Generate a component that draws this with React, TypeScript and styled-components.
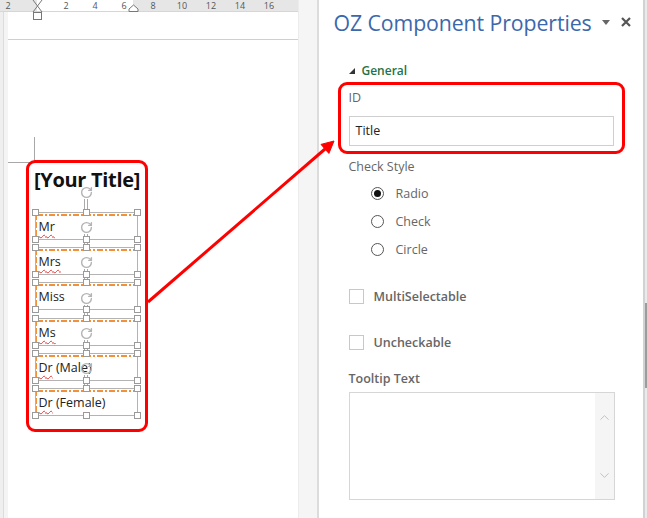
import React from "react";
import styled, { createGlobalStyle } from "styled-components";
import { ChevronDown, ChevronUp, RotateCw } from "lucide-react";

const GlobalStyle = createGlobalStyle`
  body {
    margin: 0;
    background: #fff;
    font-family: "Open Sans", "Noto Sans", sans-serif;
  }
`;

const Screen = styled.div`
  position: relative;
  display: flex;
  width: 647px;
  height: 518px;
  overflow: hidden;
  background: #fff;
`;

/* ---------- document side ---------- */

const DocPane = styled.div`
  display: flex;
  flex-direction: column;
  width: 298px;
`;

const Ruler = styled.div`
  position: relative;
  display: flex;
  height: 12px;
  background: linear-gradient(
    to right,
    #e6e6e6 37px,
    #fff 37px,
    #fff 133px,
    #e6e6e6 133px
  );
  box-shadow: inset 0 -1px 0 #d6d6d6;
`;

const RulerNums = styled.div`
  display: flex;
  margin-left: -6.5px;
`;

const RulerNum = styled.span`
  width: 29px;
  text-align: center;
  font-size: 9px;
  line-height: 12px;
  color: #555;
`;

const Marker = styled.svg`
  position: absolute;
  top: 0;
  overflow: visible;
`;

const DocBody = styled.div`
  display: flex;
  flex: 1;
`;

const LeftStrip = styled.div`
  width: 8px;
  background: linear-gradient(to right, #efefef 3px, #dcdcdc 3px, #dcdcdc 4px, #f4f4f4 4px);
`;

const Page = styled.div`
  flex: 1;
  display: flex;
  flex-direction: column;
  background: #fff;
`;

const PageTop = styled.div`
  height: 27px;
  border-bottom: 1px solid #cfcfcf;
  flex-shrink: 0;
`;

const CornerMark = styled.div`
  width: 26px;
  height: 25px;
  margin-top: 97px;
  border-right: 1px solid #a8a8a8;
  border-bottom: 1px solid #a8a8a8;
  flex-shrink: 0;
`;

const HighlightBox = styled.div`
  position: relative;
  box-sizing: border-box;
  width: 122px;
  height: 272px;
  margin: -3px 0 0 18px;
  border: 3px solid #f00;
  border-radius: 9px;
  background: #fff;
  padding-top: 5px;
`;

const DocTitle = styled.div`
  text-align: center;
  font-family: "Open Sans", "Noto Sans", sans-serif;
  font-weight: 700;
  font-size: 20px;
  line-height: 24px;
  letter-spacing: -0.3px;
  color: #111;
`;

const FieldList = styled.div`
  display: flex;
  flex-direction: column;
  gap: 7.2px;
  margin: 20px 0 0 5.5px;
  width: 103px;
`;

const Field = styled.div`
  position: relative;
  box-sizing: border-box;
  height: 28px;
  border: 1px solid #b3b3b3;
  padding-left: 3px;
  font-size: 12.5px;
  line-height: 27px;
  color: #222;
  &::before {
    content: "";
    position: absolute;
    top: 1px;
    left: 1px;
    right: 1px;
    height: 2px;
    background: repeating-linear-gradient(
      to right,
      #f2913a 0 6px,
      transparent 6px 8px,
      #f2913a 8px 10px,
      transparent 10px 12px
    );
  }
  &::after {
    content: "";
    position: absolute;
    top: 1px;
    left: 0;
    width: 1.5px;
    bottom: 1px;
    background: repeating-linear-gradient(
      to bottom,
      #f2913a 0 6px,
      transparent 6px 8px
    );
  }
`;

const Handle = styled.span<{ $x: "left" | "mid" | "right"; $y: "top" | "bottom" }>`
  position: absolute;
  width: 5px;
  height: 5px;
  background: #fff;
  border: 1px solid #9a9a9a;
  ${(p) => (p.$y === "top" ? "top: -4px;" : "bottom: -4px;")}
  ${(p) =>
    p.$x === "left"
      ? "left: -4px;"
      : p.$x === "right"
      ? "right: -4px;"
      : "left: calc(50% - 3.5px);"}
  z-index: 2;
`;

const Connector = styled.span`
  position: absolute;
  top: -14px;
  left: calc(50% - 2px);
  width: 2px;
  height: 12px;
  border-left: 1px solid #aaa;
  border-right: 1px solid #aaa;
  z-index: 1;
`;

const RotateGrip = styled.span`
  position: absolute;
  top: -27px;
  left: calc(50% - 6.5px);
  display: flex;
  color: #b4b4b4;
  z-index: 3;
`;

const Misspelled = styled.span`
  text-decoration: underline wavy #e53935;
  text-decoration-thickness: 1px;
  text-underline-offset: 3px;
`;

/* ---------- gutter ---------- */

const Gutter = styled.div`
  width: 18px;
  background: #f5f5f5;
  border-left: 1px solid #ececec;
  border-right: 2px solid #dcdcdc;
`;

/* ---------- properties panel ---------- */

const Props = styled.div`
  display: flex;
  flex-direction: column;
  width: 325px;
  background: #fff;
  font-family: "Open Sans", "Noto Sans", sans-serif;
`;

const PropsHeader = styled.div`
  display: flex;
  align-items: center;
  justify-content: space-between;
  height: 44px;
  padding: 0 12px 0 15px;
  flex-shrink: 0;
`;

const PropsTitle = styled.div`
  font-size: 21.3px;
  color: #3b68ad;
  letter-spacing: -0.1px;
`;

const HeaderTools = styled.div`
  display: flex;
  align-items: center;
  gap: 11px;
  color: #555;
`;

const PropsBody = styled.div`
  display: flex;
  flex-direction: column;
  padding: 19px 0 0 30px;
`;

const Section = styled.div`
  display: flex;
  align-items: center;
  gap: 7px;
  font-size: 12px;
  line-height: 16px;
  font-weight: 600;
  color: #247346;
`;

const IdBox = styled.div`
  box-sizing: border-box;
  width: 287px;
  margin: 3px 0 0 -11px;
  padding: 5px 8px 5px 8px;
  border: 3px solid #f00;
  border-radius: 9px;
`;

const Label = styled.div<{ $bold?: boolean }>`
  font-size: 12.5px;
  line-height: 16px;
  color: #666;
  font-weight: ${(p) => (p.$bold ? 600 : 400)};
`;

const TextInput = styled.div`
  box-sizing: border-box;
  height: 30px;
  margin-top: 10px;
  padding-left: 6px;
  border: 1px solid #cfcfcf;
  font-size: 12.5px;
  line-height: 28px;
  color: #222;
`;

const RadioList = styled.div`
  display: flex;
  flex-direction: column;
  padding-left: 22px;
  margin-top: 4px;
`;

const RadioRow = styled.div`
  display: flex;
  align-items: center;
  height: 28px;
  gap: 12px;
  font-size: 12.5px;
  color: #666;
`;

const RadioDot = styled.span<{ $on?: boolean }>`
  box-sizing: border-box;
  display: flex;
  align-items: center;
  justify-content: center;
  width: 13px;
  height: 13px;
  border: 1px solid #555;
  border-radius: 50%;
  background: #fff;
  &::after {
    content: "";
    width: 7px;
    height: 7px;
    border-radius: 50%;
    background: ${(p) => (p.$on ? "#111" : "transparent")};
  }
`;

const CheckRow = styled.div<{ $gap: number }>`
  display: flex;
  align-items: center;
  gap: 10px;
  height: 20px;
  margin-top: ${(p) => p.$gap}px;
  font-size: 12.5px;
  font-weight: 600;
  color: #666;
`;

const CheckBox = styled.span`
  box-sizing: border-box;
  width: 15px;
  height: 15px;
  border: 1px solid #c8c8c8;
  background: #fff;
`;

const TextArea = styled.div`
  box-sizing: border-box;
  display: flex;
  justify-content: flex-end;
  width: 266px;
  height: 108px;
  margin-top: 5px;
  border: 1px solid #d6d6d6;
`;

const AreaScroll = styled.div`
  display: flex;
  flex-direction: column;
  justify-content: space-between;
  align-items: center;
  width: 19px;
  padding: 17px 0 16px;
  background: #f5f5f5;
  color: #c2c2c2;
`;

/* ---------- right edge ---------- */

const Edge = styled.div`
  display: flex;
  width: 4px;
`;

const EdgeLine = styled.div`
  width: 2px;
  background: #d2d2d2;
`;

const EdgeScroll = styled.div`
  display: flex;
  flex-direction: column;
  width: 2px;
  background: #eaeaea;
`;

const EdgeThumb = styled.div`
  height: 85px;
  margin-top: 303px;
  background: #9c9c9c;
`;

const ArrowLayer = styled.svg`
  position: absolute;
  inset: 0;
  pointer-events: none;
`;

const fields: { words: string[]; typo: boolean[] }[] = [
  { words: ["Mr"], typo: [true] },
  { words: ["Mrs"], typo: [true] },
  { words: ["Miss"], typo: [false] },
  { words: ["Ms"], typo: [true] },
  { words: ["Dr", "(Male)"], typo: [true, false] },
  { words: ["Dr", "(Female)"], typo: [true, false] },
];

const rulerNums = ["2", "", "2", "4", "6", "8", "10", "12", "14", "16"];

export default function App() {
  return (
    <>
      <GlobalStyle />
      <Screen>
        <DocPane>
          <Ruler>
            <RulerNums>
              {rulerNums.map((n, i) => (
                <RulerNum key={i}>{n}</RulerNum>
              ))}
            </RulerNums>
            <Marker style={{ left: 32 }} width="11" height="21" viewBox="0 0 11 21">
              <path d="M1 0 L5.5 6 L10 0 M1 12 L5.5 6 L10 12" fill="none" stroke="#777" strokeWidth="1" />
              <rect x="1.5" y="12.5" width="8" height="7" fill="#fff" stroke="#777" strokeWidth="1" />
            </Marker>
            <Marker style={{ left: 128 }} width="11" height="12" viewBox="0 0 11 12">
              <path d="M1 11.5 L1 9 L5.5 5 L10 9 L10 11.5 Z" fill="#fff" stroke="#777" strokeWidth="1" />
            </Marker>
          </Ruler>
          <DocBody>
            <LeftStrip />
            <Page>
              <PageTop />
              <CornerMark />
              <HighlightBox>
                <DocTitle>[Your Title]</DocTitle>
                <FieldList>
                  {fields.map((f, i) => (
                    <Field key={i}>
                      <RotateGrip>
                        <RotateCw size={13} strokeWidth={2.6} />
                      </RotateGrip>
                      <Connector />
                      <Handle $x="left" $y="top" />
                      <Handle $x="mid" $y="top" />
                      <Handle $x="right" $y="top" />
                      <Handle $x="left" $y="bottom" />
                      <Handle $x="mid" $y="bottom" />
                      <Handle $x="right" $y="bottom" />
                      {f.words.map((w, j) => (
                        <React.Fragment key={j}>
                          {j > 0 && " "}
                          {f.typo[j] ? <Misspelled>{w}</Misspelled> : w}
                        </React.Fragment>
                      ))}
                    </Field>
                  ))}
                </FieldList>
              </HighlightBox>
            </Page>
          </DocBody>
        </DocPane>

        <Gutter />

        <Props>
          <PropsHeader>
            <PropsTitle>OZ Component Properties</PropsTitle>
            <HeaderTools>
              <svg width="8" height="5" viewBox="0 0 8 5">
                <path d="M0 0 H8 L4 5 Z" fill="#666" />
              </svg>
              <svg width="10" height="10" viewBox="0 0 10 10">
                <path d="M1 1 L9 9 M9 1 L1 9" stroke="#555" strokeWidth="2.2" />
              </svg>
            </HeaderTools>
          </PropsHeader>
          <PropsBody>
            <Section>
              <svg width="6" height="6" viewBox="0 0 6 6">
                <path d="M6 0 V6 H0 Z" fill="#333" />
              </svg>
              General
            </Section>
            <IdBox>
              <Label>ID</Label>
              <TextInput>Title</TextInput>
            </IdBox>
            <Label style={{ marginTop: 5 }}>Check Style</Label>
            <RadioList>
              <RadioRow>
                <RadioDot $on />
                Radio
              </RadioRow>
              <RadioRow>
                <RadioDot />
                Check
              </RadioRow>
              <RadioRow>
                <RadioDot />
                Circle
              </RadioRow>
            </RadioList>
            <CheckRow $gap={23}>
              <CheckBox />
              MultiSelectable
            </CheckRow>
            <CheckRow $gap={26}>
              <CheckBox />
              Uncheckable
            </CheckRow>
            <Label $bold style={{ marginTop: 19 }}>
              Tooltip Text
            </Label>
            <TextArea>
              <AreaScroll>
                <ChevronUp size={15} strokeWidth={1.6} />
                <ChevronDown size={15} strokeWidth={1.6} />
              </AreaScroll>
            </TextArea>
          </PropsBody>
        </Props>

        <Edge>
          <EdgeLine />
          <EdgeScroll>
            <EdgeThumb />
          </EdgeScroll>
        </Edge>

        <ArrowLayer width="647" height="518" viewBox="0 0 647 518">
          <line x1="148" y1="302" x2="325" y2="149" stroke="#f00" strokeWidth="3" />
          <polygon points="334,141 328.9,153.4 321,144.4" fill="#f00" stroke="#f00" strokeWidth="1" />
        </ArrowLayer>
      </Screen>
    </>
  );
}
